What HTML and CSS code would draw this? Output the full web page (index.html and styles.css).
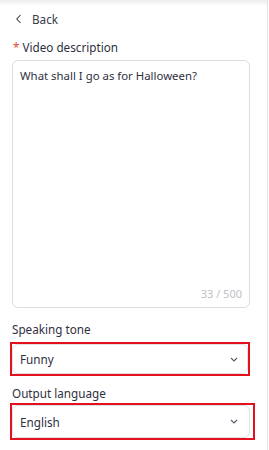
FILE: index.html
```html
<!DOCTYPE html>
<html lang="en">
<head>
    <meta charset="UTF-8">
    <meta name="viewport" content="width=device-width, initial-scale=1.0">
    <title>Video script</title>
    <link rel="stylesheet" href="styles.css">
</head>
<body>
    <div class="top-shade"></div>
    <main class="panel">
        <a class="back" href="#">
            <svg width="8" height="10" viewBox="0 0 8 10"><path d="M5.5 1 L1.8 5 L5.5 9" fill="none" stroke="#444" stroke-width="1.1"/></svg>
            <span>Back</span>
        </a>

        <label class="field-label first"><span class="req">*</span> Video description</label>
        <div class="textarea">
            <div class="textarea-text">What shall I go as for Halloween?</div>
            <div class="counter">33 / 500</div>
        </div>

        <label class="field-label">Speaking tone</label>
        <div class="mark tight">
            <div class="select small">
                <span>Funny</span>
                <svg width="8" height="5" viewBox="0 0 8 5"><path d="M1 1 L4 4 L7 1" fill="none" stroke="#555a6a" stroke-width="1.1"/></svg>
            </div>
        </div>

        <label class="field-label lang">Output language</label>
        <div class="mark loose">
            <div class="select">
                <span>English</span>
                <svg width="8" height="5" viewBox="0 0 8 5"><path d="M1 1 L4 4 L7 1" fill="none" stroke="#555a6a" stroke-width="1.1"/></svg>
            </div>
        </div>
    </main>
</body>
</html>
```

FILE: styles.css
```css
* {
    padding: 0;
    margin: 0;
    box-sizing: border-box;
}

body {
    background: #fff;
    font-family: "Noto Sans", "DejaVu Sans", sans-serif;
    color: #2e3040;
    font-size: 11.7px;
    width: 268px;
    height: 450px;
    border-right: 1px solid #e2e2e6;
}

.top-shade {
    height: 6px;
    background: linear-gradient(#ececee, #fff);
}

.panel {
    padding: 0 17px 0 12px;
}

.back {
    display: flex;
    align-items: center;
    gap: 9px;
    margin-top: 6px;
    height: 14px;
    padding-left: 3px;
    color: #3a3c4a;
    text-decoration: none;
}

.field-label {
    display: block;
    line-height: 16px;
    height: 16px;
    margin-top: 13px;
    margin-bottom: 5px;
}

.field-label.first {
    padding-left: 1px;
}

.field-label.lang {
    margin-top: 9px;
    margin-bottom: 2px;
}

.req {
    color: #e8443a;
}

.textarea {
    height: 248px;
    border: 1px solid #dcdce2;
    border-radius: 6px;
    padding: 7px 7px 6px 7px;
    display: flex;
    flex-direction: column;
    justify-content: space-between;
}

.textarea-text {
    line-height: 16px;
    font-size: 11.4px;
}

.counter {
    align-self: flex-end;
    color: #c0c0c6;
    font-size: 11px;
    line-height: 14px;
}

.mark {
    border: 2px solid #e3101e;
    margin-left: -2px;
}

.mark.tight {
    width: 240px;
}

.mark.loose {
    width: 245px;
    padding-right: 3px;
}

.select {
    display: flex;
    align-items: center;
    justify-content: space-between;
    height: 33px;
    border: 1px solid #e0e0e6;
    border-radius: 6px;
    padding: 0 11px 0 7px;
}

.select.small {
    height: 30px;
    padding-right: 9px;
}
```
